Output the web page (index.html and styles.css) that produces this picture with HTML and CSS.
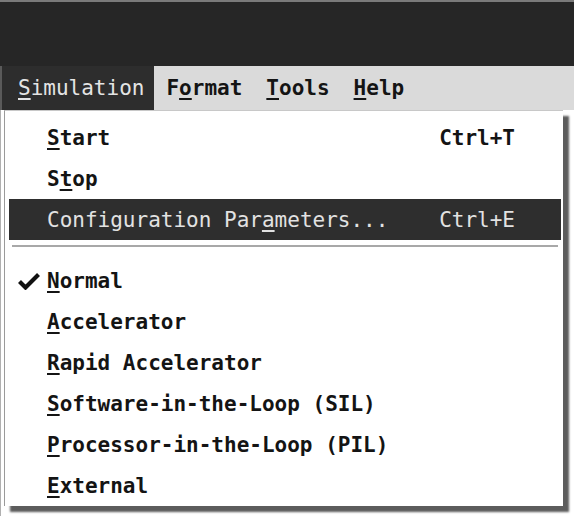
FILE: index.html
```html
<!DOCTYPE html>
<html>
<head>
<meta charset="utf-8">
<link rel="stylesheet" href="styles.css">
</head>
<body>
<div class="titlebar"></div>
<div class="menubar">
  <span class="mi active"><u>S</u>imulation</span>
  <span class="mi">F<u>o</u>rmat</span>
  <span class="mi"><u>T</u>ools</span>
  <span class="mi"><u>H</u>elp</span>
</div>
<div class="stage">
  <div class="menu">
    <div class="row"><span class="chk"></span><span class="lbl"><u>S</u>tart</span><span class="key">Ctrl+T</span></div>
    <div class="row"><span class="chk"></span><span class="lbl">S<u>t</u>op</span><span class="key"></span></div>
    <div class="row hl"><span class="chk"></span><span class="lbl">Configuration Par<u>a</u>meters...</span><span class="key">Ctrl+E</span></div>
    <div class="sep"></div>
    <div class="row"><span class="chk"><svg width="22" height="18" viewBox="0 0 22 18"><path d="M1.5 9.5 L7.5 15.5 L20.5 2.5" fill="none" stroke="#111" stroke-width="4.2" stroke-linejoin="miter"/></svg></span><span class="lbl"><u>N</u>ormal</span><span class="key"></span></div>
    <div class="row"><span class="chk"></span><span class="lbl"><u>A</u>ccelerator</span><span class="key"></span></div>
    <div class="row"><span class="chk"></span><span class="lbl"><u>R</u>apid Accelerator</span><span class="key"></span></div>
    <div class="row"><span class="chk"></span><span class="lbl"><u>S</u>oftware-in-the-Loop (SIL)</span><span class="key"></span></div>
    <div class="row"><span class="chk"></span><span class="lbl"><u>P</u>rocessor-in-the-Loop (PIL)</span><span class="key"></span></div>
    <div class="row"><span class="chk"></span><span class="lbl"><u>E</u>xternal</span><span class="key"></span></div>
  </div>
</div>
</body>
</html>
```
FILE: styles.css
```css
html, body {
  margin: 0;
  padding: 0;
  background: #ffffff;
}
body {
  width: 574px;
  height: 516px;
  overflow: hidden;
  font-family: "DejaVu Sans Mono", "Liberation Mono", monospace;
  font-size: 21px;
  font-weight: bold;
  color: #141414;
}
u {
  text-decoration: underline;
  text-decoration-thickness: 2px;
  text-underline-offset: 3px;
}
.titlebar {
  height: 64px;
  background: #262626;
  border-top: 2px solid #7a7a7a;
}
.menubar {
  height: 44px;
  background: #dadada;
  display: flex;
  align-items: center;
}
.mi {
  height: 100%;
  display: flex;
  align-items: center;
  padding: 0 12px;
}
.mi.active {
  background: #2d2d2d;
  color: #e4e4e4;
  font-weight: normal;
  padding: 0 10px 0 16px;
  border-left: 2px solid #5a5a5a;
}
.stage {
  padding-left: 3px;
  border-left: 1px solid #b0b0b0;
  height: 408px;
}
.menu {
  width: 559px;
  height: 396px;
  background: #ffffff;
  border-left: 1px solid #9a9a9a;
  border-top: 1px solid #c8c8c8;
  padding-top: 6px;
  box-sizing: border-box;
  box-shadow: 6px 6px 2px #5c5c5c;
}
.row {
  height: 41px;
  margin: 0 2px 0 4px;
  display: grid;
  grid-template-columns: 38px 1fr auto;
  align-items: center;
}
.row.hl {
  background: #2e2e2e;
  color: #e2e2e2;
  font-weight: normal;
}
.chk {
  padding-left: 9px;
  display: flex;
  align-items: center;
}
.key {
  padding-right: 46px;
}
.sep {
  height: 20px;
  margin: 0 5px 0 7px;
  display: flex;
  flex-direction: column;
  justify-content: flex-start;
  padding-top: 5px;
  box-sizing: border-box;
}
.sep::before {
  content: "";
  display: block;
  height: 2px;
  background: #a8a8a8;
}
```
